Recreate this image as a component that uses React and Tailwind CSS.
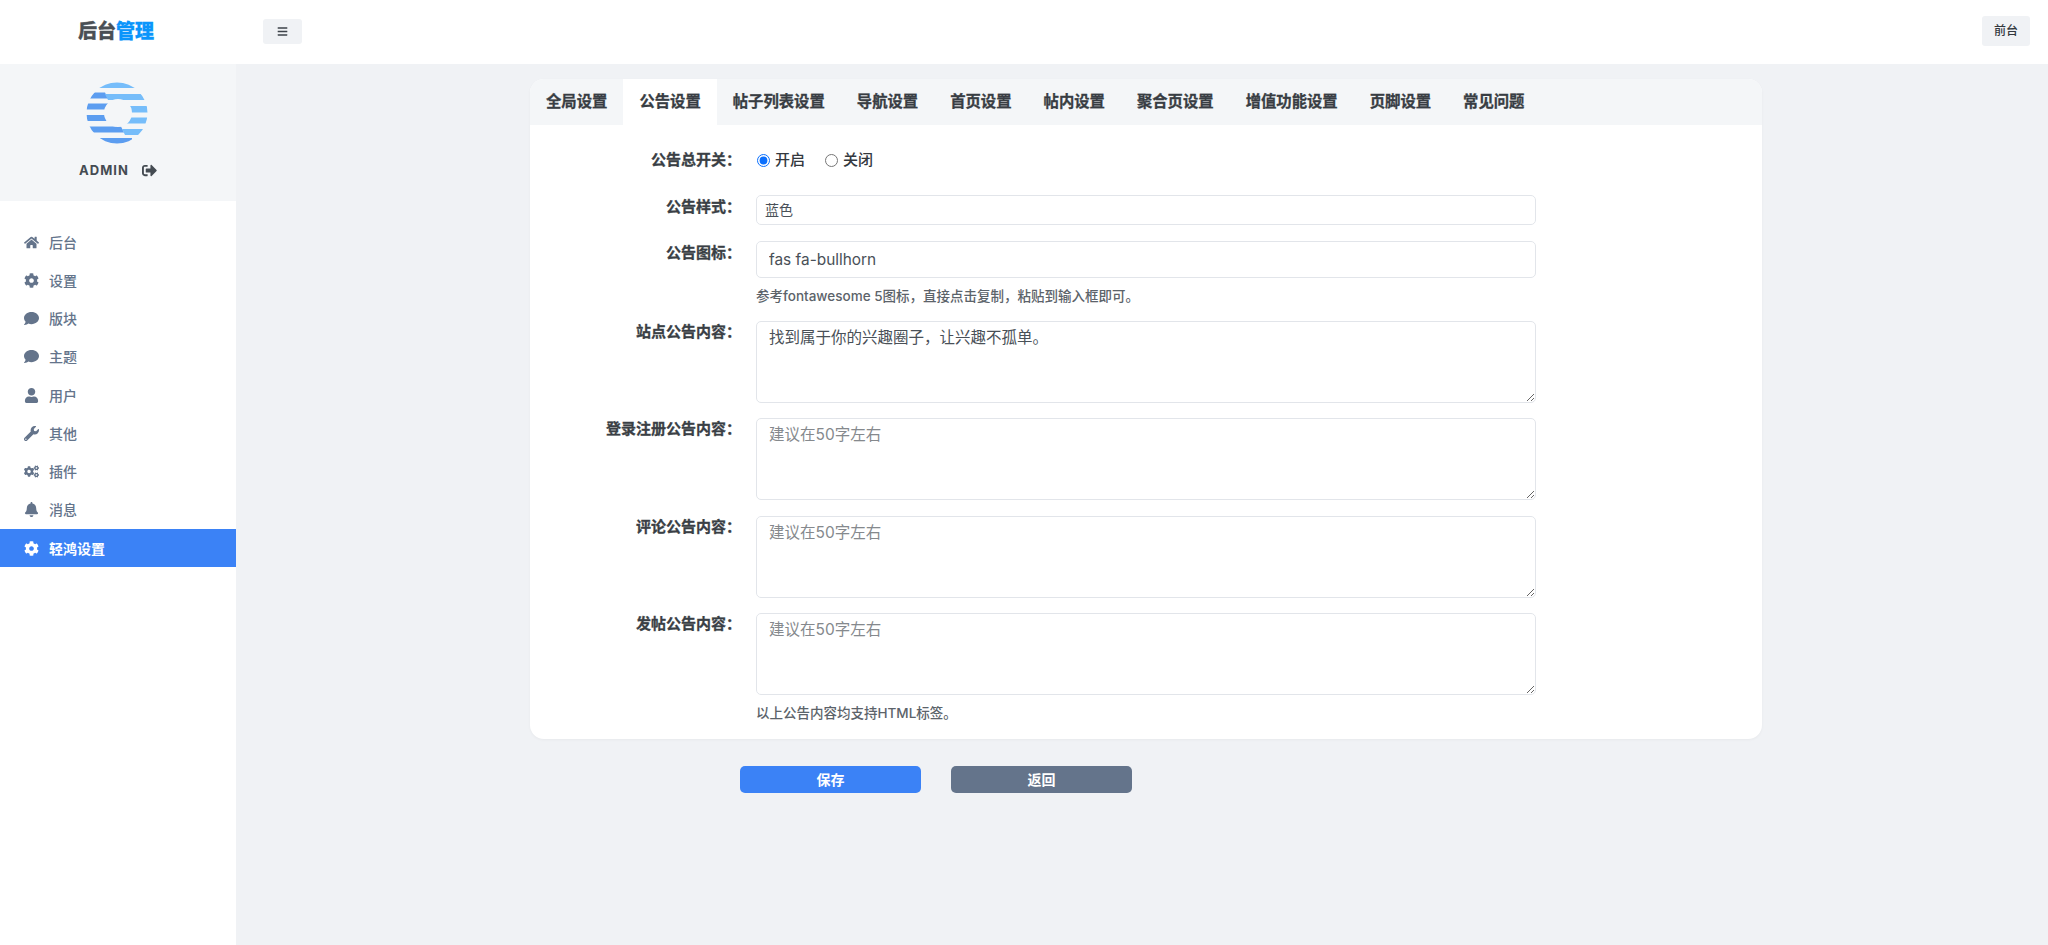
import {
  FaHome,
  FaCog,
  FaComment,
  FaUser,
  FaWrench,
  FaCogs,
  FaBell,
  FaSignOutAlt,
  FaBars,
} from 'react-icons/fa';

const navItems = [
  { label: '后台', icon: FaHome },
  { label: '设置', icon: FaCog },
  { label: '版块', icon: FaComment },
  { label: '主题', icon: FaComment },
  { label: '用户', icon: FaUser },
  { label: '其他', icon: FaWrench },
  { label: '插件', icon: FaCogs },
  { label: '消息', icon: FaBell },
  { label: '轻鸿设置', icon: FaCog, active: true },
];

const tabs = ['全局设置', '公告设置', '帖子列表设置', '导航设置', '首页设置', '帖内设置', '聚合页设置', '增值功能设置', '页脚设置', '常见问题'];

function Avatar() {
  return (
    <svg width="62" height="62" viewBox="85 82 62 62">
      <defs>
        <clipPath id="ring">
          <path
            clipRule="evenodd"
            d="M116 82.5a30.5 30.5 0 1 0 0 61a30.5 30.5 0 1 0 0-61zM117 99a14 14 0 1 1 0 28a14 14 0 1 1 0-28z"
          />
        </clipPath>
      </defs>
      <g clipPath="url(#ring)">
        <rect x="85" y="82" width="62" height="6" fill="#76bdfa" />
        <path d="M85 92.5h19l3 6H85z" fill="#5c9df0" />
        <path d="M104 94h43v6h-40z" fill="#76bdfa" />
        <rect x="85" y="103.5" width="25" height="6" fill="#5c9df0" />
        <rect x="125" y="106" width="22" height="6.5" fill="#76bdfa" />
        <rect x="85" y="115" width="25" height="6" fill="#5c9df0" />
        <path d="M125 117.5h22v6h-24z" fill="#76bdfa" />
        <path d="M85 126.5h35l3 6H85z" fill="#5c9df0" />
        <path d="M121 129h26v6h-23z" fill="#76bdfa" />
        <rect x="85" y="138" width="46" height="6" fill="#5c9df0" />
      </g>
    </svg>
  );
}

function Sidebar() {
  return (
    <aside className="w-[236px] shrink-0 bg-white">
      <div className="h-[137px] bg-[#f4f6f8] flex flex-col items-center pt-[18px] pr-[2px]">
        <Avatar />
        <div className="mt-[16px] ml-[2px] flex items-center gap-[13px] text-[#444b52]">
          <span className="text-[13px] font-bold tracking-[1px] leading-5">ADMIN</span>
          <FaSignOutAlt className="text-[15px]" />
        </div>
      </div>
      <nav className="pt-[22px]">
        {navItems.map((item) => {
          const Icon = item.icon;
          return (
            <div
              key={item.label}
              className={`h-[38.25px] pl-[23px] flex items-center text-[14px] ${
                item.active ? 'bg-[#3b82f6] text-white font-bold' : 'text-[#64748b] font-medium'
              }`}
            >
              <span className="w-[16px] flex justify-center">
                <Icon className="text-[15px]" />
              </span>
              <span className="ml-[10px]">{item.label}</span>
            </div>
          );
        })}
      </nav>
    </aside>
  );
}

function Row({ label, labelClass = 'pt-[2px]', children }) {
  return (
    <div className="flex">
      <div className={`w-[211px] shrink-0 text-right text-[15px] font-bold leading-5 text-[#3a3f45] [-webkit-text-stroke:0.3px_#3a3f45] ${labelClass}`}>
        {label}
      </div>
      <div className="w-[780px] ml-[15px]">{children}</div>
    </div>
  );
}

function Notice({ label, value, placeholder, hint }) {
  return (
    <Row label={label} labelClass="pt-[1px]">
      <textarea
        readOnly
        value={value}
        placeholder={placeholder}
        className="block w-full h-[82px] rounded-[5px] border border-[#e2e5ea] bg-white px-3 py-[5px] text-[15.5px] leading-[22px] text-[#495057] placeholder:text-[#85898d] outline-none resize-y"
      />
      {hint && <p className="mt-[8px] text-[13.5px] leading-5 font-medium text-[#5c636a]">{hint}</p>}
    </Row>
  );
}

export default function App() {
  return (
    <div className='min-h-[945px] bg-[#f0f2f5] flex flex-col font-["Inter","Noto_Sans_CJK_SC",sans-serif]'>
      <header className="h-[64px] pb-[2px] bg-white flex items-center shrink-0">
        <div className="w-[236px] shrink-0 pl-[78px] text-[19px] font-black leading-none text-[#4a4f55] [-webkit-text-stroke:0.3px_currentColor]">
          后台<span className="text-[#0a95fb]">管理</span>
        </div>
        <button className="ml-[27px] w-[39px] h-[25px] rounded-[3px] bg-[#f0f2f5] flex items-center justify-center text-[#3d434a]">
          <FaBars className="text-[11px]" />
        </button>
        <button className="ml-auto mr-[18px] w-[48px] h-[30px] rounded-[3px] bg-[#f0f2f5] text-[12px] font-medium text-[#33383e]">
          前台
        </button>
      </header>

      <div className="flex flex-1">
        <Sidebar />
        <main className="flex-1 pt-[15px] pl-[294px]">
          <div className="w-[1232px] rounded-[14px] bg-white shadow-[0_1px_3px_rgba(0,0,0,0.04)] overflow-hidden">
            <div className="h-[46px] bg-[#f4f6f8] flex">
              {tabs.map((tab) => (
                <div
                  key={tab}
                  className={`px-[16px] flex items-center text-[15.35px] font-bold text-[#383d43] [-webkit-text-stroke:0.3px_#383d43] ${
                    tab === '公告设置' ? 'bg-white' : ''
                  }`}
                >
                  {tab}
                </div>
              ))}
            </div>
            <div className="pt-[25px] pb-[16px] flex flex-col">
              <Row label="公告总开关：" labelClass="pt-0">
                <div className="h-5 flex items-center text-[15px] text-[#33383e] font-medium pl-[1px]">
                  <input type="radio" name="notice" defaultChecked className="w-[13px] h-[13px] accent-[#0b6ffd]" />
                  <span className="ml-[5px]">开启</span>
                  <input type="radio" name="notice" className="ml-[20px] w-[13px] h-[13px]" />
                  <span className="ml-[5px]">关闭</span>
                </div>
              </Row>
              <div className="mt-[25px]">
                <Row label="公告样式：">
                  <div className="h-[30px] rounded-[5px] border border-[#e2e5ea] bg-white px-2 text-[14px] leading-[28px] text-[#495057]">
                    蓝色
                  </div>
                </Row>
              </div>
              <div className="mt-[16px]">
                <Row label="公告图标：">
                  <input
                    readOnly
                    value="fas fa-bullhorn"
                    className="block w-full h-[37px] rounded-[5px] border border-[#e2e5ea] bg-white px-3 text-[15.4px] text-[#495057] outline-none"
                  />
                  <p className="mt-[8px] text-[13.5px] leading-5 font-medium text-[#5c636a]">
                    参考fontawesome 5图标，直接点击复制，粘贴到输入框即可。
                  </p>
                </Row>
              </div>
              <div className="mt-[15px]">
                <Notice label="站点公告内容：" value="找到属于你的兴趣圈子，让兴趣不孤单。" />
              </div>
              <div className="mt-[15px]">
                <Notice label="登录注册公告内容：" placeholder="建议在50字左右" />
              </div>
              <div className="mt-[16px]">
                <Notice label="评论公告内容：" placeholder="建议在50字左右" />
              </div>
              <div className="mt-[15px]">
                <Notice label="发帖公告内容：" placeholder="建议在50字左右" hint="以上公告内容均支持HTML标签。" />
              </div>
            </div>
          </div>
          <div className="mt-[27px] ml-[210px] flex gap-[30px]">
            <button className="w-[181px] h-[27px] rounded-[5px] bg-[#3b82f6] text-white text-[14px] font-bold">保存</button>
            <button className="w-[181px] h-[27px] rounded-[5px] bg-[#64748b] text-white text-[14px] font-bold">返回</button>
          </div>
        </main>
      </div>
    </div>
  );
}
